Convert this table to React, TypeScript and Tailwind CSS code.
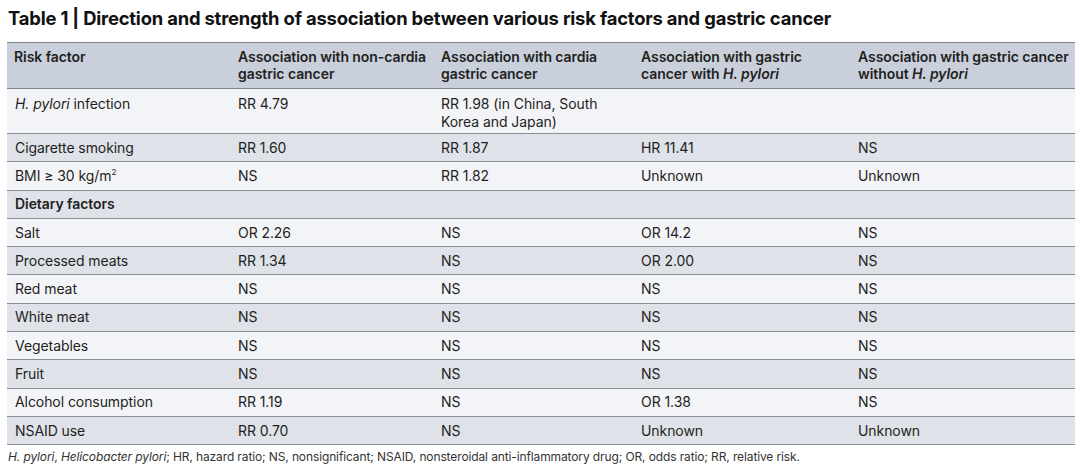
const rows: { f: React.ReactNode; c: string[]; bold?: boolean; tall?: boolean }[] = [
  {
    f: (<><i>H. pylori</i> infection</>),
    c: ['RR 4.79', 'RR 1.98 (in China, South Korea and Japan)', '', ''],
    tall: true,
  },
  { f: 'Cigarette smoking', c: ['RR 1.60', 'RR 1.87', 'HR 11.41', 'NS'] },
  {
    f: (<>BMI ≥ 30 kg/m<sup className="text-[8px] relative -top-[6px]">2</sup></>),
    c: ['NS', 'RR 1.82', 'Unknown', 'Unknown'],
  },
  { f: 'Dietary factors', c: ['', '', '', ''], bold: true },
  { f: 'Salt', c: ['OR 2.26', 'NS', 'OR 14.2', 'NS'] },
  { f: 'Processed meats', c: ['RR 1.34', 'NS', 'OR 2.00', 'NS'] },
  { f: 'Red meat', c: ['NS', 'NS', 'NS', 'NS'] },
  { f: 'White meat', c: ['NS', 'NS', 'NS', 'NS'] },
  { f: 'Vegetables', c: ['NS', 'NS', 'NS', 'NS'] },
  { f: 'Fruit', c: ['NS', 'NS', 'NS', 'NS'] },
  { f: 'Alcohol consumption', c: ['RR 1.19', 'NS', 'OR 1.38', 'NS'] },
  { f: 'NSAID use', c: ['RR 0.70', 'NS', 'Unknown', 'Unknown'] },
];

export default function App() {
  return (
    <div className="w-[1080px] h-[469px] bg-white text-[#231f20] font-['Inter','Liberation_Sans',sans-serif] overflow-hidden">
      <h1 className="pl-[8px] pt-[7px] text-[18.4px] leading-[22px] font-bold tracking-[-0.01em] text-[#111]">
        Table 1 | Direction and strength of association between various risk factors and gastric cancer
      </h1>

      <table className="ml-[7px] mt-[13px] w-[1068px] table-fixed border-collapse text-[14px] tracking-[-0.005em]">
        <colgroup>
          <col className="w-[224px]" />
          <col className="w-[203px]" />
          <col className="w-[200px]" />
          <col className="w-[217px]" />
          <col className="w-[224px]" />
        </colgroup>
        <thead>
          <tr className="bg-[#c9cfdb] border-t-[1.5px] border-b border-[#7d828b] h-[46px] align-top">
            <th className="text-left font-semibold px-[7px] pt-[5px] leading-[17px] whitespace-nowrap">Risk factor</th>
            <th className="text-left font-semibold px-[7px] pt-[5px] leading-[17px] whitespace-nowrap">
              Association with non-cardia
              <br />
              gastric cancer
            </th>
            <th className="text-left font-semibold px-[7px] pt-[5px] leading-[17px] whitespace-nowrap">
              Association with cardia
              <br />
              gastric cancer
            </th>
            <th className="text-left font-semibold px-[7px] pt-[5px] leading-[17px] whitespace-nowrap">
              Association with gastric
              <br />
              cancer with <i>H. pylori</i>
            </th>
            <th className="text-left font-semibold px-[7px] pt-[5px] leading-[17px] whitespace-nowrap">
              Association with gastric cancer
              <br />
              without <i>H. pylori</i>
            </th>
          </tr>
        </thead>
        <tbody>
          {rows.map((r, i) => (
            <tr
              key={i}
              className={`border-b border-[#8a8e96] ${i % 2 === 0 ? 'bg-[#f3f4f8]' : 'bg-[#dfe2e9]'} ${r.tall ? 'h-[45px] align-top' : 'h-[28.3px] align-middle'}`}
            >
              <td className={`px-[8px] leading-[18px] whitespace-nowrap ${r.tall ? 'pt-[6px]' : ''} ${r.bold ? 'font-semibold' : ''}`}>{r.f}</td>
              {r.c.map((v, j) => (
                <td key={j} className={`px-[7px] leading-[18px] ${r.tall ? 'pt-[6px]' : ''} ${j === 1 && r.tall ? 'pr-[30px]' : ''}`}>
                  {v}
                </td>
              ))}
            </tr>
          ))}
        </tbody>
      </table>

      <p className="pl-[8px] pt-[4px] text-[12px] leading-[16px] text-[#333] tracking-[-0.01em]">
        <i>H. pylori</i>, <i>Helicobacter pylori</i>; HR, hazard ratio; NS, nonsignificant; NSAID, nonsteroidal anti-inflammatory drug; OR, odds ratio; RR, relative risk.
      </p>
    </div>
  );
}
